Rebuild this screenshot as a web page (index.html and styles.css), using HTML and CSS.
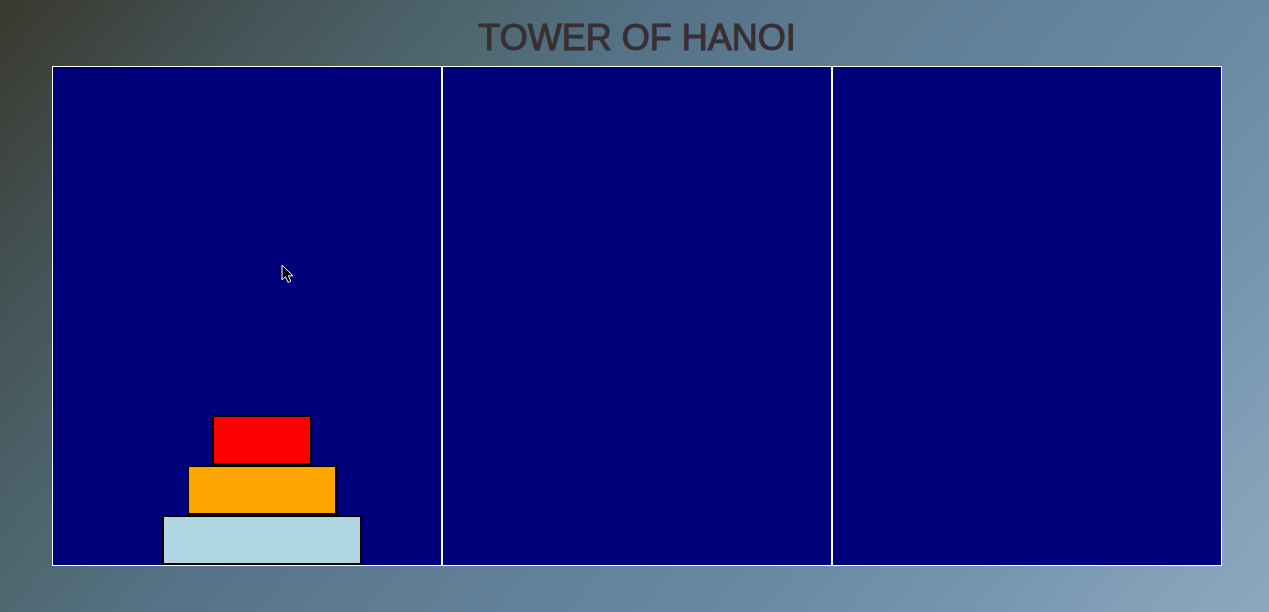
FILE: index.html
```html
<!DOCTYPE html>
<html lang="en">
<head>
<meta charset="utf-8">
<title>Tower of Hanoi</title>
<link rel="stylesheet" href="styles.css">
</head>
<body>
<h1 class="title">TOWER OF HANOI</h1>
<main class="board">
  <section class="tower" aria-label="Tower 1">
    <div class="disk disk-small"></div>
    <div class="disk disk-medium"></div>
    <div class="disk disk-large"></div>
    <svg class="cursor" viewBox="0 0 14 20" aria-hidden="true"><path d="M1 1V16L4.5 12.8L7 18.4L9.8 17.2L7.4 11.8H12Z"/></svg>
  </section>
  <section class="tower" aria-label="Tower 2"></section>
  <section class="tower" aria-label="Tower 3"></section>
</main>
</body>
</html>
```
FILE: styles.css
```css
* {
  box-sizing: border-box;
}

html {
  min-height: 100%;
  background: linear-gradient(130deg, #3a382e 0%, #3d413b 5%, #435052 13%, #4b6067 23%, #4f6972 29%, #557286 37%, #607f97 53%, #6988a1 70%, #7191ab 78%, #7797b0 84%, #819fb7 91%, #8aa9be 100%);
}

body {
  margin: 0;
  padding: 16px 47px 0 52px;
  font-family: "Liberation Sans", Arial, sans-serif;
}

.title {
  margin: 0 0 6px;
  font-size: 36px;
  font-weight: 400;
  line-height: 44px;
  text-align: center;
  color: #392e33;
  -webkit-text-stroke: 1px #392e33;
}

.board {
  display: grid;
  grid-template-columns: repeat(3, 1fr);
}

.tower {
  position: relative;
  display: flex;
  flex-direction: column;
  align-items: center;
  justify-content: flex-end;
  min-height: 500px;
  padding-left: 30px;
  border: 1px solid #fff;
  background: #00007b;
}

.disk {
  height: 50px;
  border: 2px solid #000;
}

.disk-small {
  width: 100px;
  background: #f00;
}

.disk-medium {
  width: 150px;
  background: #ffa500;
}

.disk-large {
  width: 200px;
  background: #b0d5e3;
}

.cursor {
  position: absolute;
  top: 197px;
  left: 228px;
  width: 14px;
  height: 20px;
  fill: #000;
  stroke: #fff;
}
```
